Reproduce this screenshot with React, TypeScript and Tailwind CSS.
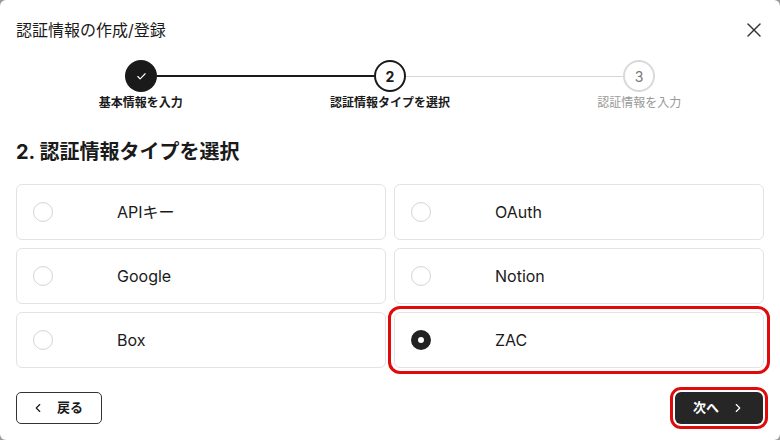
import React from "react";
import { Check, X, ChevronLeft, ChevronRight } from "lucide-react";

const font = { fontFamily: '"Inter", "Noto Sans CJK JP", sans-serif' };

const options = [
  { label: "APIキー", selected: false },
  { label: "OAuth", selected: false },
  { label: "Google", selected: false },
  { label: "Notion", selected: false },
  { label: "Box", selected: false },
  { label: "ZAC", selected: true },
];

export default function App() {
  return (
    <div className="w-[780px] h-[440px] bg-[#9a9a9a]" style={font}>
      <div className="w-full h-full bg-white rounded-[6px] flex flex-col px-4 pt-[18px] text-[#1a1a1a]">
        {/* Header */}
        <div className="flex items-center justify-between h-6">
          <div className="text-[16px] leading-6">認証情報の作成/登録</div>
          <X className="w-6 h-6 text-[#333] -mr-[2px]" strokeWidth={1.4} />
        </div>

        {/* Stepper */}
        <div className="mt-[18px] flex items-center px-[109px]">
          <div className="w-8 h-8 rounded-full bg-[#1a1a1a] flex items-center justify-center shrink-0">
            <Check className="w-[11px] h-[11px] text-white" strokeWidth={2.5} />
          </div>
          <div className="flex-1 h-[1.5px] bg-[#1a1a1a]" />
          <div className="w-8 h-8 rounded-full border-2 border-[#1a1a1a] bg-white flex items-center justify-center shrink-0 text-[14px] font-bold">
            2
          </div>
          <div className="flex-1 h-px bg-[#d6d6d6]" />
          <div className="w-8 h-8 rounded-full border-2 border-[#d9d9d9] bg-white flex items-center justify-center shrink-0 text-[14px] text-[#777]">
            3
          </div>
        </div>
        <div className="mt-[3px] grid grid-cols-3 text-[12px] leading-4 text-center">
          <div className="font-bold">基本情報を入力</div>
          <div className="font-bold">認証情報タイプを選択</div>
          <div className="text-[#999]">認証情報を入力</div>
        </div>

        {/* Heading */}
        <div className="mt-[27px] text-[20px] leading-7 font-bold">2. 認証情報タイプを選択</div>

        {/* Options */}
        <div className="mt-[18px] grid grid-cols-2 gap-2">
          {options.map((o) => (
            <div
              key={o.label}
              className={
                "h-14 rounded-[6px] border border-[#e3e3e3] flex items-center pl-4 bg-white" +
                (o.selected ? " outline-[3px] outline-solid outline-[#e00a0a] outline-offset-[3px]" : "")
              }
            >
              {o.selected ? (
                <div className="w-5 h-5 rounded-full border-[7px] border-[#222] bg-white shrink-0" />
              ) : (
                <div className="w-5 h-5 rounded-full border border-[#d4d4d4] bg-white shrink-0" />
              )}
              <div className="ml-[64px] text-[16px] leading-6">{o.label}</div>
            </div>
          ))}
        </div>

        {/* Footer */}
        <div className="mt-6 flex items-center justify-between">
          <button className="h-8 rounded-[5px] border border-[#333] bg-white flex items-center pl-[14px] pr-[18px] gap-[12px] text-[13px] font-bold text-[#1a1a1a]">
            <ChevronLeft className="w-[14px] h-[14px]" strokeWidth={2} />
            <span>戻る</span>
          </button>
          <button className="h-8 rounded-[6px] bg-[#262626] text-white flex items-center pl-[18px] pr-[18px] gap-[12px] text-[13px] font-bold outline-[3px] outline-solid outline-[#e00a0a] outline-offset-[2px] mr-[1px]">
            <span>次へ</span>
            <ChevronRight className="w-[14px] h-[14px]" strokeWidth={2} />
          </button>
        </div>
      </div>
    </div>
  );
}
